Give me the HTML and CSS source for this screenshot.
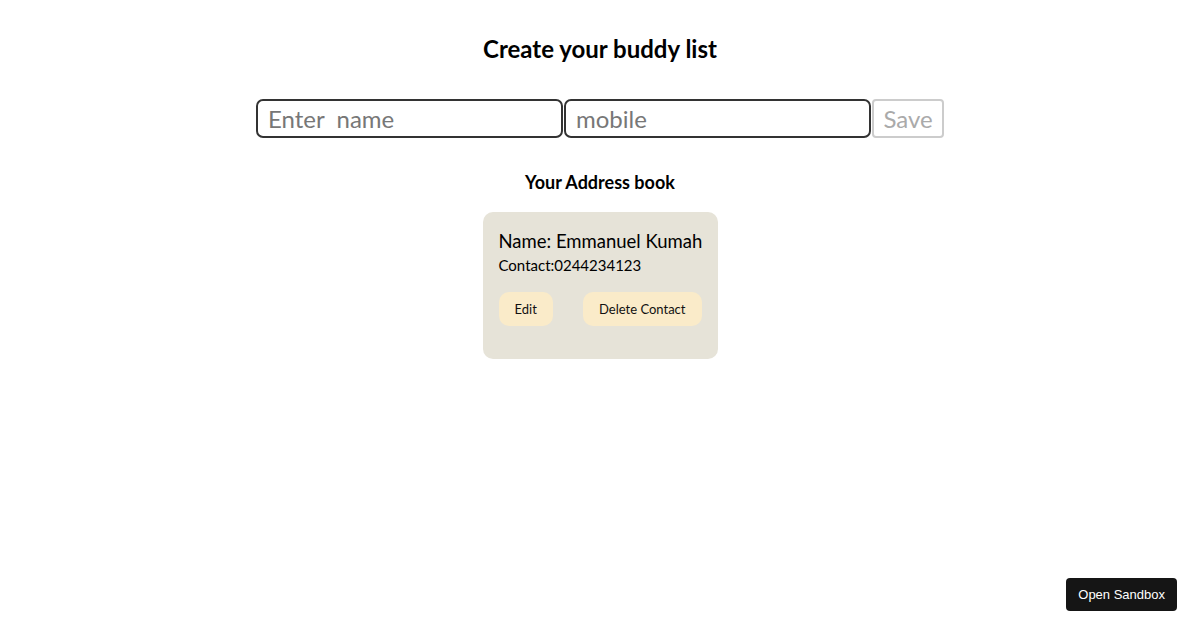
FILE: index.html
```html
<!DOCTYPE html>
<html lang="en">

<head>
    <meta charset="UTF-8">
    <meta name="viewport" content="width=device-width, initial-scale=1.0">
    <title>buddy list</title>
    <link rel="stylesheet" href="styles.css">
</head>

<body>
    <div id="app">
        <h2 class="title">Create your buddy list</h2>
        <div class="form">
            <input type="text" placeholder="Enter  name">
            <input type="text" placeholder="mobile">
            <button class="save" disabled>Save</button>
        </div>
        <h4 class="sub">Your Address book</h4>
        <div class="list">
            <div class="card">
                <p class="name">Name: Emmanuel Kumah</p>
                <p class="contact">Contact:0244234123</p>
                <div class="actions">
                    <button>Edit</button>
                    <button>Delete Contact</button>
                </div>
            </div>
        </div>
    </div>
    <a class="sandbox" href="#">Open Sandbox</a>
</body>

</html>
```

FILE: styles.css
```css
* {
    padding: 0;
    margin: 0;
    box-sizing: border-box;
}

body {
    font-family: Lato, "Liberation Sans", sans-serif;
    color: #000;
    background: #fff;
}

#app {
    display: flex;
    flex-direction: column;
    align-items: center;
    padding-top: 33px;
}

.title {
    font-size: 24px;
    font-weight: 700;
    line-height: 32px;
}

.form {
    display: flex;
    margin-top: 34px;
}

.form input {
    width: 307px;
    height: 39px;
    margin-right: 1px;
    padding: 0 10px;
    border: 2px solid #333;
    border-radius: 7px;
    font-family: inherit;
    font-size: 24px;
    outline: none;
}

.form input::placeholder {
    color: #777;
}

.save {
    width: 72px;
    height: 39px;
    border: 2px solid #ccc;
    border-radius: 4px;
    background: #fff;
    color: #aaa;
    font-family: inherit;
    font-size: 24px;
}

.sub {
    margin-top: 32px;
    font-size: 18px;
    font-weight: 700;
    line-height: 24px;
}

.list {
    margin-top: 18px;
}

.card {
    width: 235px;
    padding: 17px 16px 33px;
    border-radius: 10px;
    background: #e6e3d8;
}

.name {
    font-size: 18.5px;
    line-height: 24px;
    white-space: nowrap;
}

.contact {
    font-size: 15px;
    line-height: 24px;
}

.actions {
    display: flex;
    justify-content: space-between;
    margin-top: 15px;
}

.actions button {
    height: 34px;
    padding: 0 16px;
    border: none;
    border-radius: 10px;
    background: #faebc9;
    font-family: inherit;
    font-size: 13px;
    color: #111;
}

.sandbox {
    position: fixed;
    right: 23px;
    bottom: 19px;
    padding: 8px 12px;
    border-radius: 4px;
    background: #151515;
    color: #fff;
    font-family: "Liberation Sans", Arial, sans-serif;
    font-size: 13px;
    line-height: 17px;
    text-decoration: none;
}
```
